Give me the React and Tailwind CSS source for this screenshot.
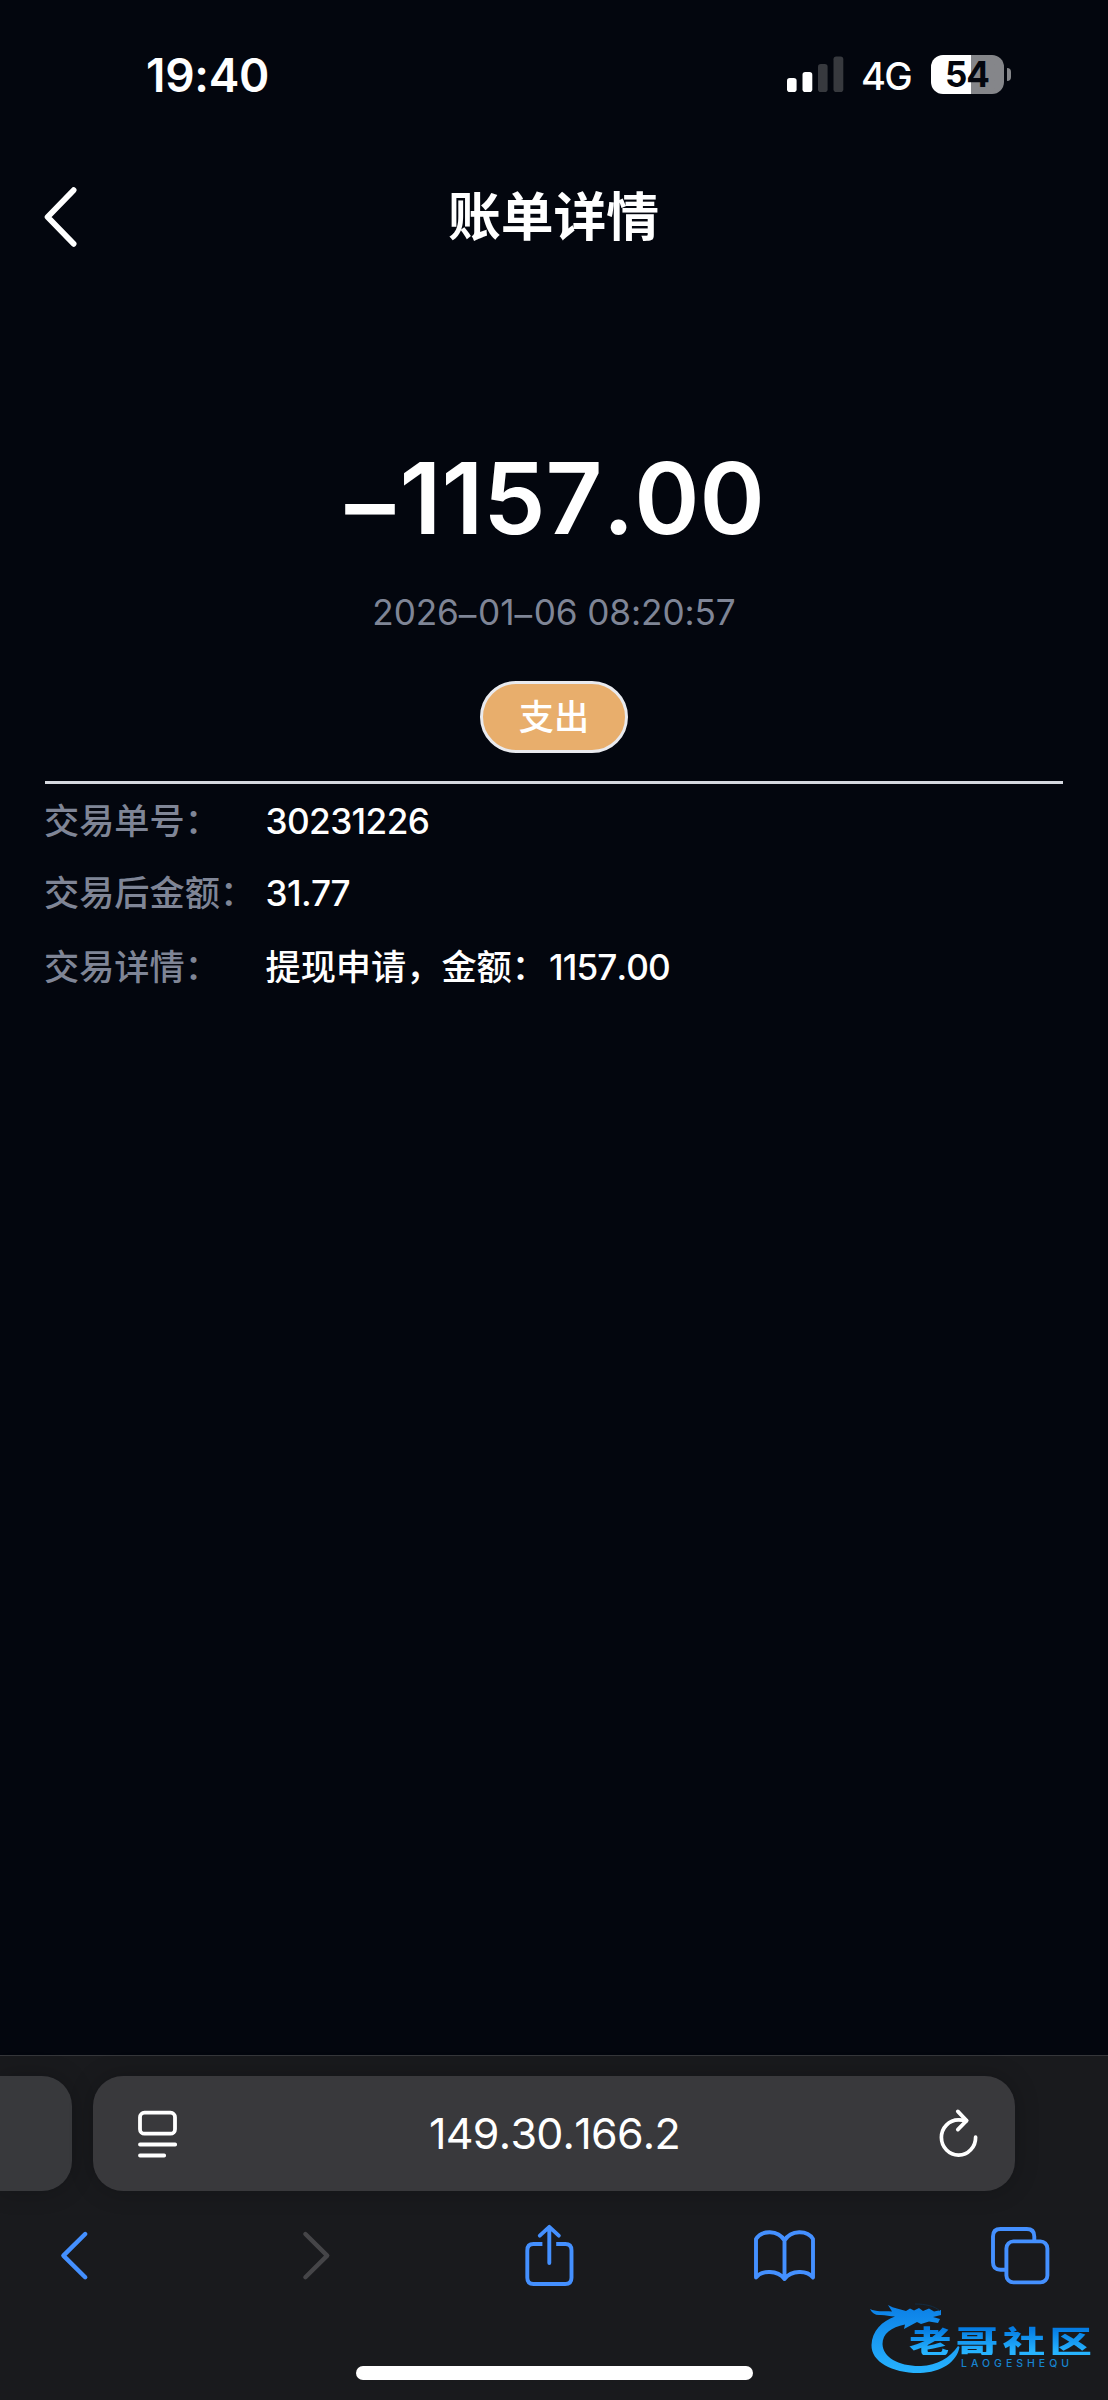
import React from "react";

function StatusBar() {
  return (
    <div className="flex h-[150px] items-start justify-between pl-[146px] pr-[97px] text-white">
      <div className="mt-[50px] text-[46px] leading-[50px] font-semibold tracking-[-0.3px]">19:40</div>
      <div className="mt-[55px] flex h-[39px] items-start">
        <svg className="mt-[1px] block" width="57" height="37" viewBox="0 0 57 37">
          <rect x="0" y="22" width="9.6" height="14" rx="2.8" fill="#fff" />
          <rect x="15.5" y="16" width="9.8" height="20" rx="2.8" fill="#fff" />
          <rect x="31" y="8" width="9.6" height="28" rx="2.8" fill="#37393e" />
          <rect x="46.5" y="0.5" width="9.8" height="35.5" rx="2.8" fill="#37393e" />
        </svg>
        <div className="ml-[17px] w-[52px] text-[38px] leading-[43px] font-medium tracking-[-1.6px]">4G</div>
        <div className="ml-[18px] flex h-[39px] w-[73px] items-center justify-center rounded-[12px] bg-linear-to-r from-white from-[54.5%] to-[#85868a] to-[54.5%] pr-[1px] text-[35px] leading-[39px] font-bold tracking-[-1px] text-[#03060e]">
          54
        </div>
        <div className="mt-[13px] ml-[2.5px] h-[13px] w-[4.5px] rounded-r-full bg-[#85868a]" />
      </div>
    </div>
  );
}

function Header() {
  return (
    <div className="flex h-[134px] items-center text-white">
      <svg className="ml-[40px] block" width="40" height="66" viewBox="0 0 40 66">
        <path d="M33.6 6.2 L7.6 33 L33.6 59.8" fill="none" stroke="#fff" strokeWidth="5.8" strokeLinecap="round" strokeLinejoin="round" />
      </svg>
      <h1 className="flex-1 pr-[81px] text-center text-[52.8px] leading-[60px] font-bold">账单详情</h1>
    </div>
  );
}

function Row({ label, children, className }) {
  return (
    <div className={"flex text-[35.2px] leading-[48px] font-medium " + className}>
      <div className="-ml-px w-[221.5px] text-[#7f8596]">{label}</div>
      <div className="text-white [font-kerning:none]">{children}</div>
    </div>
  );
}

function Dash() {
  return <span className="mr-[0.05em] inline-block translate-y-[0.055em]">–</span>;
}

function BrowserBar() {
  return (
    <div className="h-[345px] border-t border-[#35363a] bg-[#191a1d]">
      <div className="flex pt-[20px]">
        <div className="h-[115px] w-[72px] rounded-r-[30px] bg-[#38393c] shadow-[0_0_24px_rgba(0,0,0,0.22)]" />
        <div className="ml-[21px] flex h-[115px] w-[922px] items-center rounded-[30px] bg-[#39393c] shadow-[0_0_24px_rgba(0,0,0,0.22)]">
          <svg className="ml-[44px] block" width="42" height="50" viewBox="137 2109 42 50" fill="none" stroke="#fff" strokeWidth="3.8" strokeLinecap="round">
            <rect x="140" y="2112.7" width="35" height="21" rx="4.5" />
            <path d="M140 2144.5H175.2M140 2155.5H164.2" />
          </svg>
          <div className="flex-1 pr-[7px] text-center text-[43px] leading-[59px] tracking-[-0.75px] text-white [font-kerning:none]">149.30.166.2</div>
          <svg className="mr-[36px] block" width="42" height="54" viewBox="937 2106 42 54" fill="none" stroke="#fff" strokeWidth="3.7" strokeLinecap="round" strokeLinejoin="round">
            <path d="M975.6 2136.2A17.1 17.6 0 1 1 958.5 2118.9Q963 2118.9 966.5 2119.6" />
            <path d="M957.8 2110.4L966.6 2119.6L957.8 2128.6" />
          </svg>
        </div>
      </div>
      <div className="mt-[27px] flex h-[76px] items-center pl-[56px]">
        <svg className="block" width="36" height="56" viewBox="56 2228 36 56" fill="none" stroke="#4490ff" strokeWidth="4.4" strokeLinecap="round" strokeLinejoin="round">
          <path d="M85.2 2234L63.4 2255.6L85.2 2277.2" />
        </svg>
        <svg className="ml-[206px] block" width="36" height="56" viewBox="298 2228 36 56" fill="none" stroke="#454548" strokeWidth="4.4" strokeLinecap="round" strokeLinejoin="round">
          <path d="M305.4 2234L327.2 2255.6L305.4 2277.2" />
        </svg>
        <svg className="ml-[188px] block" width="54" height="66" viewBox="522 2222 54 66" fill="none" stroke="#4490ff" strokeWidth="3.9" strokeLinecap="round" strokeLinejoin="round">
          <path d="M542.4 2243H533.5Q527.3 2243 527.3 2249.4V2276.8Q527.3 2283 533.5 2283H565.3Q571.5 2283 571.5 2276.8V2249.4Q571.5 2243 565.3 2243H556.2" strokeLinecap="butt" />
          <path d="M549.3 2262V2226.4M539.8 2234.6L549.3 2225.9L558.8 2234.6" />
        </svg>
        <svg className="ml-[175px] block" width="66" height="58" viewBox="751 2227 66 58" fill="none" stroke="#4490ff" strokeWidth="3.9" strokeLinecap="round" strokeLinejoin="round">
          <path d="M784.5 2240.5C778 2229.5 761.5 2230 756 2239V2277.5C762 2270 777.5 2270 784.5 2279C791.5 2270 807 2270 813 2277.5V2239C807.5 2230 791 2229.5 784.5 2240.5ZM784.5 2240.5V2279" />
        </svg>
        <svg className="ml-[172px] block" width="64" height="62" viewBox="989 2225 64 62" fill="none" stroke="#4490ff" strokeWidth="3.9">
          <path d="M1006 2269.7H1000.5Q993 2269.7 993 2262.2V2236.5Q993 2229 1000.5 2229H1026.8Q1034.3 2229 1034.3 2236.5V2241" />
          <rect x="1006.4" y="2241.4" width="41" height="41" rx="7" />
        </svg>
      </div>
      <div className="mx-auto mt-[72px] h-[14px] w-[397px] rounded-full bg-white" />
    </div>
  );
}

function Watermark() {
  return (
    <div className="absolute top-[2300px] left-[866px] h-[78px] w-[230px]">
      <svg className="absolute top-0 left-0" width="100" height="78" viewBox="866 2300 100 78">
        <defs>
          <linearGradient id="dragon" x1="0" y1="0" x2="0" y2="1">
            <stop offset="0" stopColor="#0b7fe6" />
            <stop offset="1" stopColor="#27b3ff" />
          </linearGradient>
        </defs>
        <path
          fill="url(#dragon)"
          d="M870 2309C876 2312 883 2311 892 2311.5L888 2305C894 2308.500 900 2309 906 2311L910 2308.500L914 2310.500L919 2308L923 2311L929 2308.500L934 2311.500L941 2310V2315L933 2317L940 2319L938 2323L929 2321.500L921 2324L917 2322L904 2329L905 2324.500C891 2327 882.500 2334 882.500 2344C883 2357.500 899 2366.500 921 2366C937 2365.500 950 2358 958 2346L959.500 2347C957 2362 941 2372.500 920 2373C893 2373.500 871 2362 871.500 2345C872 2331 882 2321 895 2316.500C889 2316.500 885 2314.500 879 2315C875 2315 872 2313 870 2309Z"
        />
        <path d="M915 2304C925 2304 935 2306 940 2311" fill="none" stroke="#10304a" strokeWidth="0.8" />
      </svg>
      <div className="absolute top-[26px] left-[43px] origin-left scale-x-[1.39] bg-linear-to-b from-[#057ce3] from-10% to-[#27b4ff] to-90% bg-clip-text font-['Noto_Sans_CJK_SC',sans-serif] text-[30.5px] leading-[29px] font-black tracking-[3.2px] whitespace-nowrap text-transparent">
        老哥社区
      </div>
      <div className="absolute top-[58px] left-[95px] text-[10.5px] leading-[11px] font-medium tracking-[4px] whitespace-nowrap text-[#1784d0]">LAOGESHEQU</div>
    </div>
  );
}

export default function App() {
  return (
    <div className="relative flex h-[2400px] w-[1108px] flex-col overflow-hidden bg-[#03060e] font-['Inter','Noto_Sans_CJK_SC',sans-serif]">
      <StatusBar />
      <Header />
      <main className="flex-1 px-[45px]">
        <div className="flex flex-col items-center">
          <div className="mt-[154px] pl-[2px] text-[99px] leading-[120px] font-semibold text-white [font-kerning:none]">
            <Dash />1157.00
          </div>
          <div className="mt-[30px] text-[35.2px] leading-[48px] tracking-[-0.1px] text-[#7f8596]">
            2026<Dash />01<Dash />06 08:20:57
          </div>
          <div className="mt-[45px] flex h-[72px] w-[148px] items-center justify-center rounded-full border-[3px] border-[#e9eaee] bg-[#e8ae6c] text-[35.2px] leading-[48px] font-medium text-white">支出</div>
        </div>
        <div className="mt-[28px] h-[3px] bg-[#d5d8df]" />
        <Row className="mt-[13px]" label="交易单号：">
          <span className="tracking-[-0.6px]">30231226</span>
        </Row>
        <Row className="mt-[24px]" label="交易后金额：">
          <span className="tracking-[-0.6px]">31.77</span>
        </Row>
        <Row className="mt-[26px]" label="交易详情：">
          提现申请，金额：<span className="ml-[2px] tracking-[-0.9px]">1157.00</span>
        </Row>
      </main>
      <BrowserBar />
      <Watermark />
    </div>
  );
}
